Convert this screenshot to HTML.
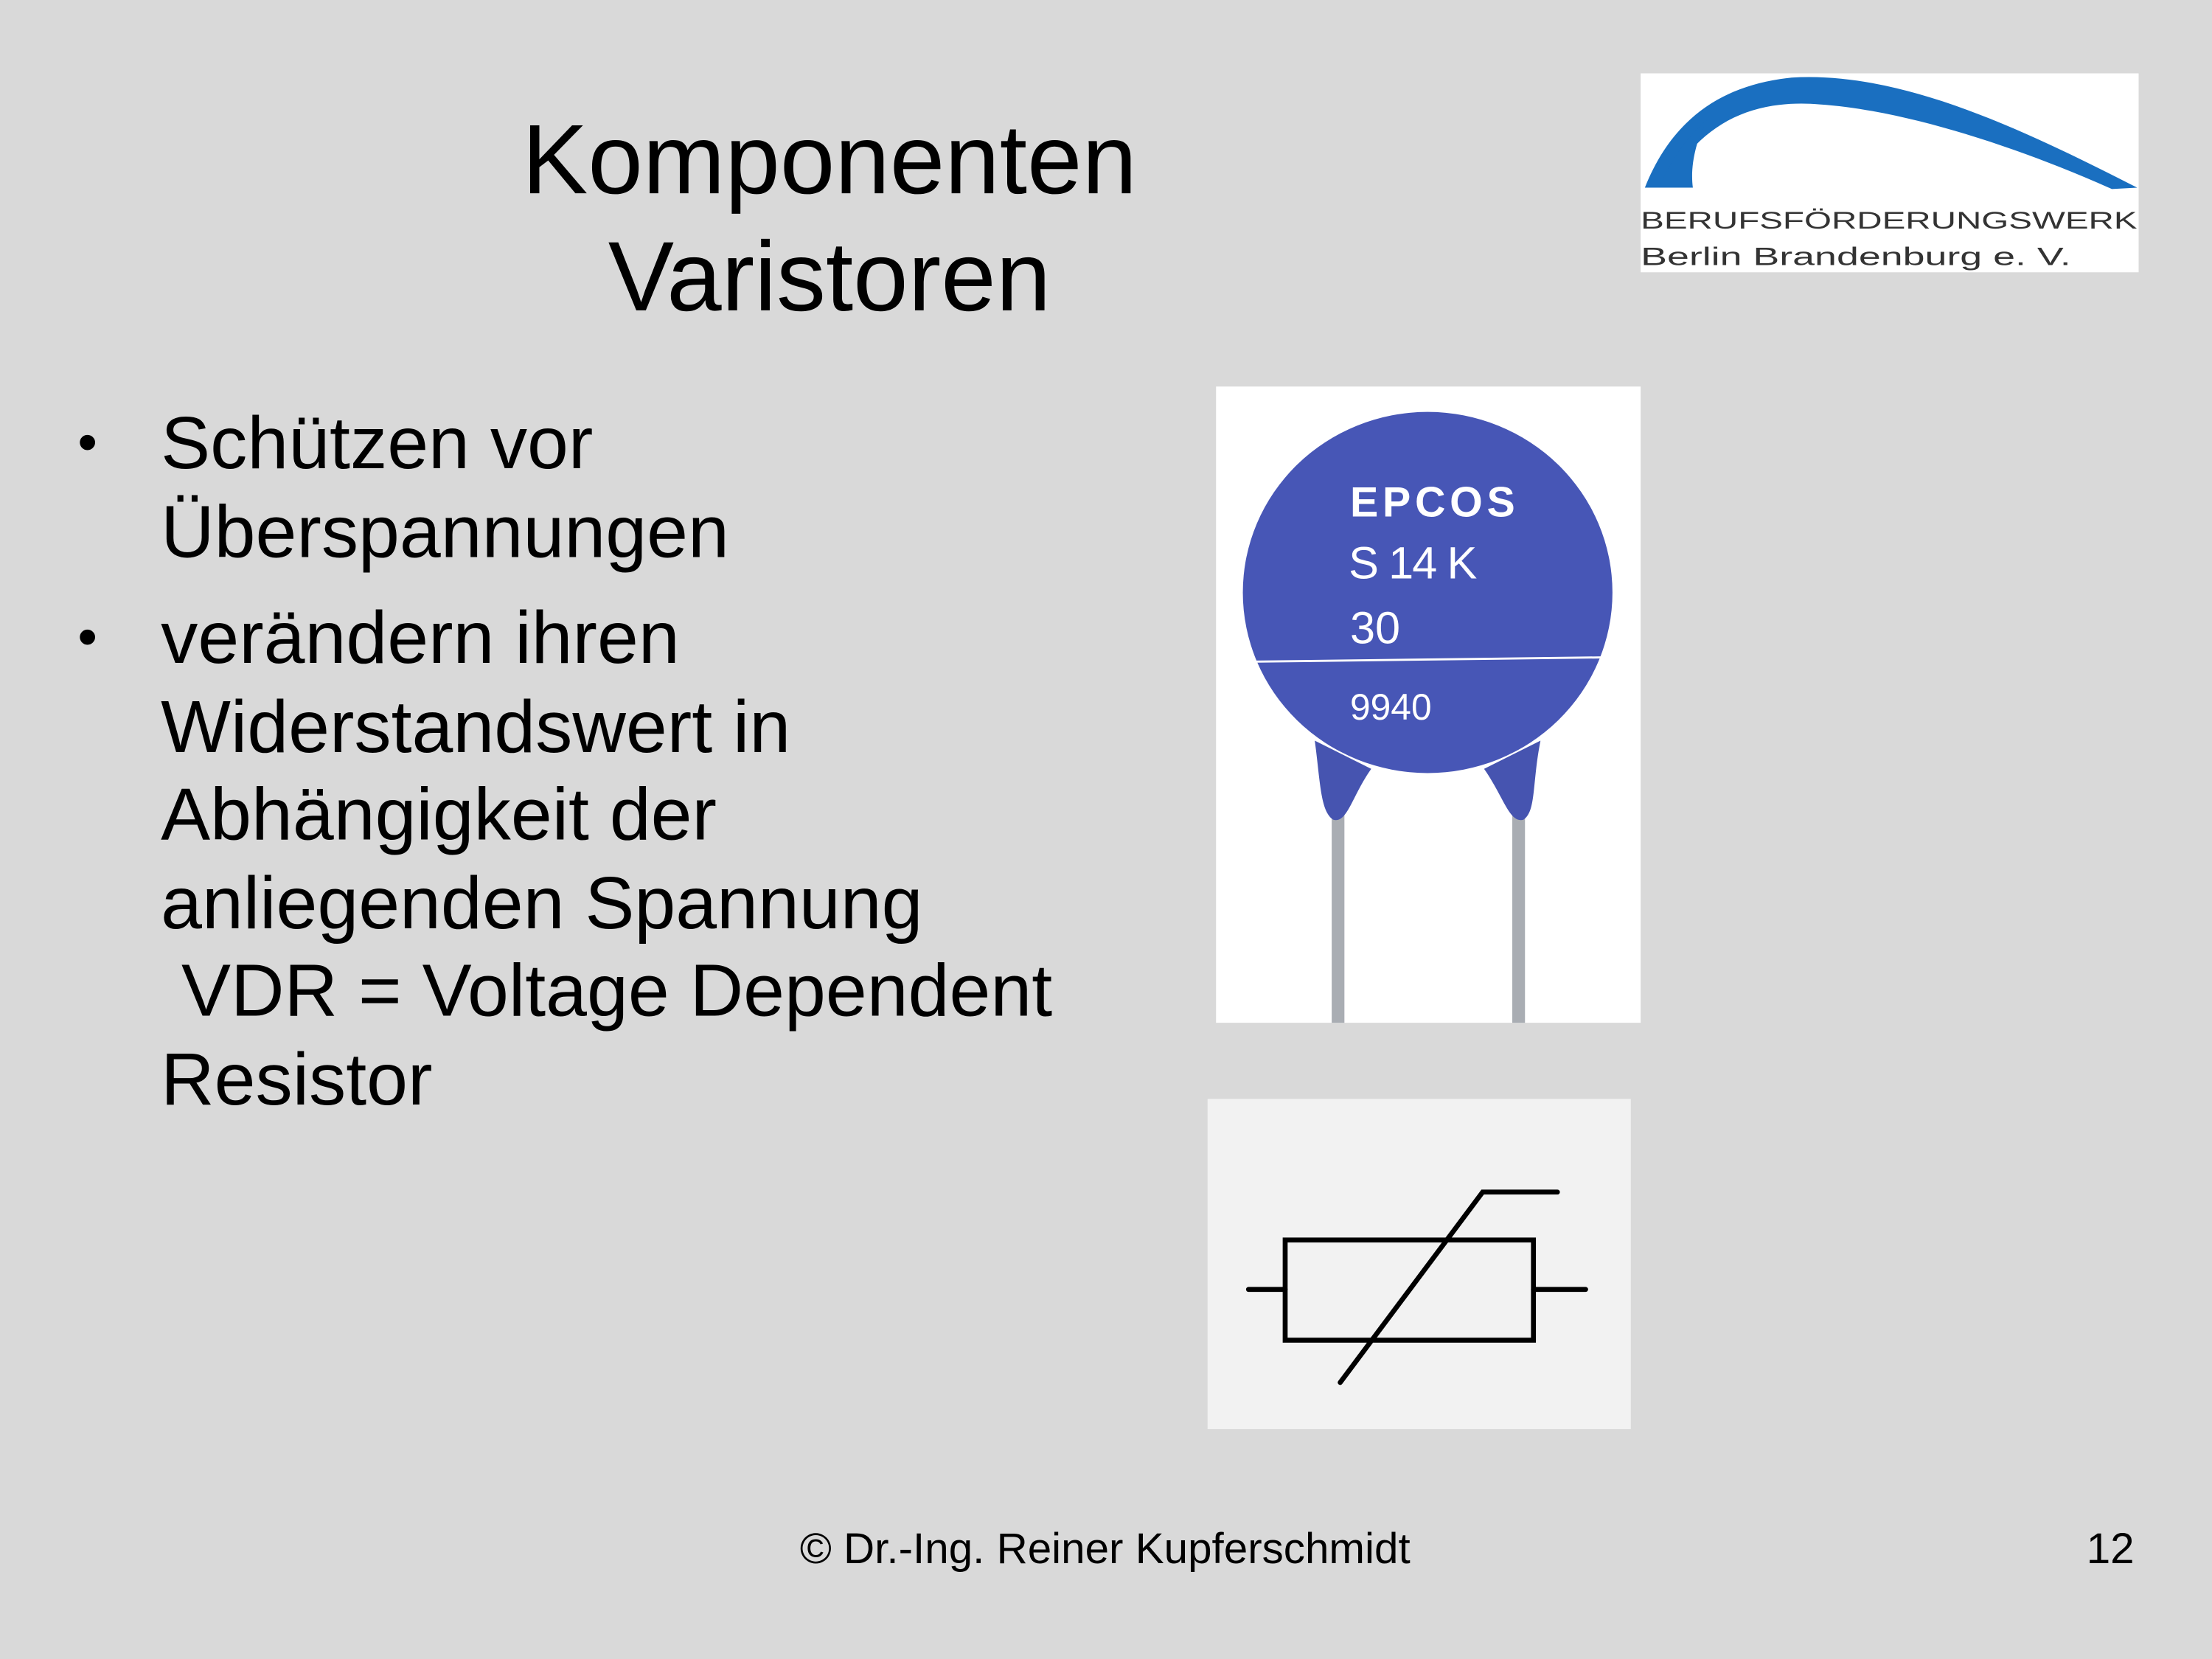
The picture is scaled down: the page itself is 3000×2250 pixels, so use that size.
<!DOCTYPE html>
<html><head><meta charset="utf-8"><style>
html,body{margin:0;padding:0;background:#d9d9d9;overflow:hidden}
#w{position:absolute;left:0;top:0;width:1568px;height:1176px;transform:scale(1.913265);transform-origin:0 0;font-family:"Liberation Sans",Arial,sans-serif;color:#000}
.t{position:absolute;left:288px;width:600px;text-align:center;font-size:70px;line-height:83px;top:72px}
.b{position:absolute;left:114px;font-size:52.5px;line-height:62.5px;width:760px}
.d{position:absolute;left:55px;font-size:40px}
.f{position:absolute;top:1081px;font-size:30.5px}
</style></head><body><div id="w">
<div class="t">Komponenten<br>Varistoren</div>
<div class="d" style="top:292px">•</div>
<div class="b" style="top:284px">Schützen vor<br>Überspannungen</div>
<div class="d" style="top:430px">•</div>
<div class="b" style="top:422px">verändern ihren<br>Widerstandswert in<br>Abhängigkeit der<br>anliegenden Spannung<br>&nbsp;VDR = Voltage Dependent<br>Resistor</div>
<div class="f" style="left:567px">© Dr.-Ing. Reiner Kupferschmidt</div>
<div class="f" style="left:1479px">12</div>

<svg style="position:absolute;left:0;top:0" width="1568" height="1176" viewBox="0 0 1568 1176">
<rect x="1163" y="52" width="353" height="141" fill="#fff"/>
<path d="M1166,133 C1185,85 1220,60 1270,55 C1350,50 1440,95 1515,133 L1497,134 C1430,104 1350,78 1290,74 C1240,70 1205,88 1180,133 Z" fill="#1a6fc0"/>
<path d="M1176,133 C1185,112 1197,96 1210,85 C1202,100 1198,118 1200,133 Z" fill="#1a6fc0"/>
<text x="1163" y="162" font-family="Liberation Sans" font-size="17" fill="#333" textLength="352" lengthAdjust="spacingAndGlyphs">BERUFSFÖRDERUNGSWERK</text>
<text x="1163" y="188" font-family="Liberation Sans" font-size="18" fill="#333" textLength="305" lengthAdjust="spacingAndGlyphs">Berlin Brandenburg e. V.</text>

<rect x="862" y="274" width="301" height="451" fill="#fff"/>
<rect x="944" y="560" width="9" height="165" fill="#a9adb3"/>
<rect x="1072" y="560" width="9" height="165" fill="#a9adb3"/>
<path d="M932,525 C936,555 936,575 945,581 C955,584 958,565 972,545 Z" fill="#4654b0"/>
<path d="M1052,545 C1066,565 1070,584 1080,581 C1089,575 1086,555 1092,525 Z" fill="#4654b0"/>
<ellipse cx="1012" cy="420" rx="131" ry="128" fill="#4756b6"/>
<line x1="890" y1="469" x2="1136" y2="466" stroke="#fff" stroke-width="1.5"/>
<text x="957" y="366" font-family="Liberation Sans" font-weight="bold" font-size="30" fill="#fff" letter-spacing="3">EPCOS</text>
<text x="956" y="410" font-family="Liberation Sans" font-size="32" fill="#fff" letter-spacing="-1">S 14 K</text>
<text x="957" y="456" font-family="Liberation Sans" font-size="32" fill="#fff">30</text>
<text x="957" y="510" font-family="Liberation Sans" font-size="26" fill="#fff">9940</text>

<rect x="856" y="779" width="300" height="234" fill="#f2f2f2"/>
<g stroke="#000" stroke-width="3.5" fill="none" stroke-linecap="round">
<rect x="911" y="879" width="176" height="71"/>
<line x1="885" y1="914" x2="911" y2="914"/>
<line x1="1087" y1="914" x2="1124" y2="914"/>
<path d="M950,980 L1051,845 L1104,845"/>
</g>
</svg>
</div></body></html>
